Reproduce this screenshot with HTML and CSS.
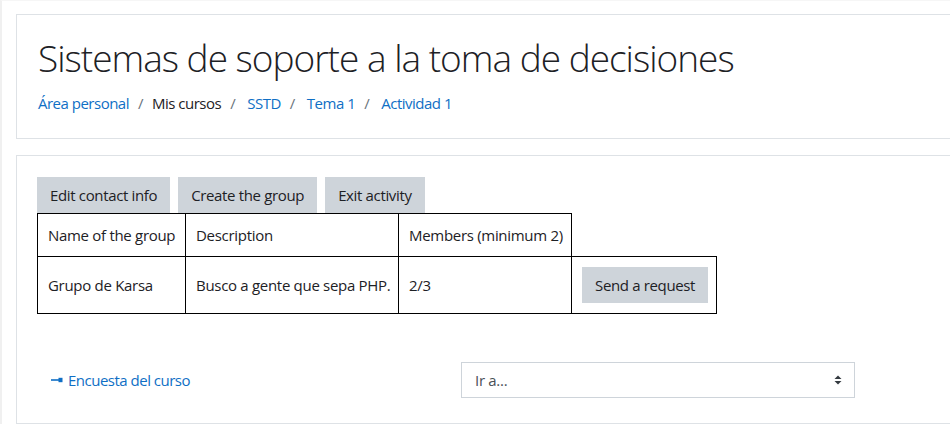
FILE: index.html
```html
<!DOCTYPE html>
<html lang="es">
<head>
<meta charset="utf-8">
<title>Sistemas de soporte a la toma de decisiones</title>
<link rel="stylesheet" href="styles.css">
</head>
<body>
<div class="page">
  <header class="card head-card">
    <h1 class="title">Sistemas de soporte a la toma de decisiones</h1>
    <nav class="crumbs">
      <a class="crumb link" href="#">Área personal</a>
      <span class="sep">/</span>
      <span class="crumb">Mis cursos</span>
      <span class="sep">/</span>
      <a class="crumb link wide" href="#">SSTD</a>
      <span class="sep">/</span>
      <a class="crumb link wide" href="#">Tema 1</a>
      <span class="sep">/</span>
      <a class="crumb link wide" href="#">Actividad 1</a>
    </nav>
  </header>

  <main class="card main-card">
    <div class="actions">
      <button class="btn">Edit contact info</button>
      <button class="btn">Create the group</button>
      <button class="btn">Exit activity</button>
    </div>
    <table class="groups">
      <colgroup>
        <col class="c1"><col class="c2"><col class="c3"><col class="c4">
      </colgroup>
      <thead>
        <tr>
          <th>Name of the group</th>
          <th>Description</th>
          <th>Members (minimum 2)</th>
        </tr>
      </thead>
      <tbody>
        <tr>
          <td>Grupo de Karsa</td>
          <td>Busco a gente que sepa PHP.</td>
          <td>2/3</td>
          <td><button class="btn">Send a request</button></td>
        </tr>
      </tbody>
    </table>

    <div class="activity-nav">
      <div class="nav-col">
        <a class="prev-link" href="#"><svg class="prev-icon" width="12" height="6" viewBox="0 0 12 6"><rect x="0" y="2.2" width="8" height="1.6" fill="#0f6fc5"/><rect x="7.5" y="0.8" width="4" height="4.4" fill="#0f6fc5"/></svg>Encuesta del curso</a>
      </div>
      <div class="nav-col">
        <div class="select">
          <span class="select-text">Ir a...</span>
          <svg class="select-arrows" width="8" height="10" viewBox="0 0 8 10"><path d="M0.5 4 L4 0.5 L7.5 4 Z" fill="#343a40"/><path d="M0.5 6 L4 9.5 L7.5 6 Z" fill="#343a40"/></svg>
        </div>
      </div>
    </div>
  </main>
</div>
</body>
</html>
```

FILE: styles.css
```css
html {
  overflow: hidden;
  background: #ffffff;
}

body {
  margin: 0;
  font-family: "Open Sans", "Noto Sans", sans-serif;
  font-size: 15px;
  letter-spacing: -0.3px;
  color: #1d2125;
  border-left: 2px solid #f0f0f0;
  border-top: 1px solid #f6f6f6;
}

.page {
  padding: 13px 0 0 14px;
  display: flex;
  flex-direction: column;
  gap: 16px;
  width: 1300px;
}

.card {
  border: 1px solid #dee2e6;
  background: #fff;
  padding: 20px;
}

.head-card {
  padding: 20px 20px 24px 21px;
}

.title {
  margin: 0 0 12px 0;
  font-size: 37px;
  font-weight: 300;
  line-height: 45px;
  color: #1d2125;
  letter-spacing: -1px;
}

.crumbs {
  display: flex;
  align-items: center;
  line-height: 22px;
  font-size: 15px;
  letter-spacing: -0.5px;
}

.crumb {
  color: #1d2125;
}

.link {
  color: #0f6fc5;
  text-decoration: none;
}

.wide {
  margin-left: 3px;
}

.sep {
  color: #6a737b;
  padding: 0 9px;
}

.main-card {
  padding: 21px 20px 25px 20px;
}

.actions {
  display: flex;
  gap: 8px;
}

.btn {
  font-family: inherit;
  font-size: 15px;
  letter-spacing: -0.35px;
  color: #1d2125;
  background: #ced4da;
  border: 0;
  height: 36px;
  padding: 0 13px;
  line-height: 36px;
}

.groups {
  border-collapse: collapse;
  table-layout: fixed;
  width: 679px;
}

.c1 { width: 148px; }
.c2 { width: 213px; }
.c3 { width: 173px; }
.c4 { width: 145px; }

.groups th,
.groups td {
  border: 1px solid #000;
  padding: 10px;
  text-align: left;
  font-weight: 400;
  white-space: nowrap;
  line-height: 22px;
  vertical-align: middle;
}

.groups td {
  height: 36px;
}

.activity-nav {
  display: grid;
  grid-template-columns: 424px 424px;
  margin: 48px -15px 0;
}

.nav-col {
  padding: 0 15px;
  display: flex;
  align-items: center;
}

.prev-link {
  display: flex;
  align-items: center;
  gap: 5px;
  color: #0f6fc5;
  text-decoration: none;
  padding-left: 14px;
  letter-spacing: -0.5px;
}

.select {
  flex: 1;
  height: 36px;
  box-sizing: border-box;
  border: 1px solid #ced4da;
  display: flex;
  align-items: center;
  justify-content: space-between;
  padding: 0 12px 0 13px;
  color: #495057;
}

.select-arrows {
  display: block;
}
```
